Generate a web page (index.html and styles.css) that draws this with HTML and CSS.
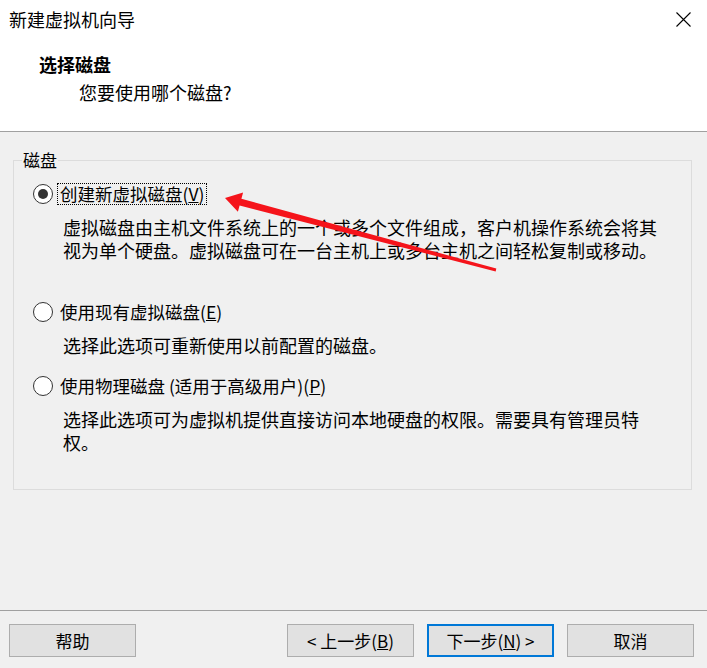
FILE: index.html
```html
<!DOCTYPE html>
<html lang="zh-CN">
<head>
<meta charset="utf-8">
<title>新建虚拟机向导</title>
<link rel="stylesheet" href="styles.css">
</head>
<body>
<div class="window">
  <header class="header">
    <div class="titlebar">
      <span class="title">新建虚拟机向导</span>
      <svg class="close" width="15" height="15" viewBox="0 0 15 15"><path d="M0.5 0.5L14.5 14.5M14.5 0.5L0.5 14.5" stroke="#000" stroke-width="1.1" fill="none"/></svg>
    </div>
    <div class="heading">选择磁盘</div>
    <div class="subheading">您要使用哪个磁盘?</div>
  </header>
  <main class="content">
    <fieldset class="group">
      <legend class="group-label">磁盘</legend>
      <div class="option option-first">
        <div class="opt-row"><span class="radio checked"></span><span class="label focused">创建新虚拟磁盘(<u>V</u>)</span></div>
        <p class="desc">虚拟磁盘由主机文件系统上的一个或多个文件组成，客户机操作系统会将其视为单个硬盘。虚拟磁盘可在一台主机上或多台主机之间轻松复制或移动。</p>
      </div>
      <div class="option option-second">
        <div class="opt-row"><span class="radio"></span><span class="label">使用现有虚拟磁盘(<u>E</u>)</span></div>
        <p class="desc">选择此选项可重新使用以前配置的磁盘。</p>
      </div>
      <div class="option option-third">
        <div class="opt-row"><span class="radio"></span><span class="label">使用物理磁盘 (适用于高级用户)(<u>P</u>)</span></div>
        <p class="desc">选择此选项可为虚拟机提供直接访问本地硬盘的权限。需要具有管理员特权。</p>
      </div>
    </fieldset>
  </main>
  <footer class="footer">
    <button class="btn">帮助</button>
    <div class="spacer"></div>
    <button class="btn">&lt; 上一步(<u>B</u>)</button>
    <button class="btn primary">下一步(<u>N</u>) &gt;</button>
    <button class="btn">取消</button>
  </footer>
  <svg class="annotation" width="707" height="668" viewBox="0 0 707 668">
    <polygon fill="#f5141b" points="225,198 243.1,192.4 241.4,198.7 496.3,268.6 495.7,271.4 239.6,205.5 237.9,211.8"/>
  </svg>
</div>
</body>
</html>
```
FILE: styles.css
```css
* { box-sizing: border-box; }
html, body { margin: 0; padding: 0; }
body {
  font-family: "Noto Sans CJK SC", "Noto Sans", sans-serif;
  color: #000;
  background: #f0f0f0;
}
.window {
  position: relative;
  width: 707px;
  height: 668px;
  display: flex;
  flex-direction: column;
  background: #f0f0f0;
  overflow: hidden;
}
.header {
  height: 132px;
  flex: none;
  background: #fff;
  border-bottom: 1px solid #a0a0a0;
}
.titlebar {
  display: flex;
  justify-content: space-between;
  align-items: flex-start;
  padding: 9px 16px 0 9px;
}
.title {
  font-size: 18px;
  line-height: 21px;
}
.close { margin-top: 3px; display: block; }
.heading {
  margin-top: 24px;
  padding-left: 39px;
  font-size: 18px;
  line-height: 21px;
  font-weight: bold;
}
.subheading {
  margin-top: 7px;
  padding-left: 79px;
  font-size: 18px;
  line-height: 21px;
}
.content {
  flex: 1;
  padding: 18px 15px 0 13px;
}
.group {
  margin: 0;
  border: 1px solid #dcdcdc;
  padding: 12px 0 0 0;
  height: 340px;
}
.group-label {
  margin-left: 8px;
  padding: 0 1px;
  font-size: 17px;
  line-height: 20px;
}
.option { margin-left: 19px; }
.opt-row {
  display: flex;
  align-items: center;
  height: 24px;
}
.radio {
  width: 20px;
  height: 20px;
  border: 1.5px solid #333;
  border-radius: 50%;
  background: #fff;
  display: flex;
  align-items: center;
  justify-content: center;
  flex: none;
}
.radio.checked::after {
  content: "";
  width: 10px;
  height: 10px;
  border-radius: 50%;
  background: #333;
}
.label {
  margin-left: 4px;
  padding: 0 2px;
  border: 1px dotted transparent;
  font-size: 17.5px;
  line-height: 20px;
}
.label.focused { border-color: #000; }
.desc {
  margin: 9.5px 0 0 30px;
  width: 600px;
  font-size: 18px;
  line-height: 23px;
}
.option-second { margin-top: 38.5px; }
.option-third { margin-top: 17.5px; }
.footer {
  flex: none;
  height: 58px;
  border-top: 1px solid #a0a0a0;
  display: flex;
  align-items: flex-start;
  gap: 13px;
  padding: 13px 13px 0 9px;
}
.spacer { flex: 1; }
.btn {
  width: 127px;
  height: 33px;
  background: #e1e1e1;
  border: 1px solid #adadad;
  font-family: "Noto Sans CJK SC", "Noto Sans", sans-serif;
  font-size: 17px;
  color: #000;
  padding: 0;
  margin: 0;
  line-height: 20px;
}
.btn.primary { border: 2px solid #0078d7; }
.annotation {
  position: absolute;
  left: 0;
  top: 0;
  pointer-events: none;
}
```
